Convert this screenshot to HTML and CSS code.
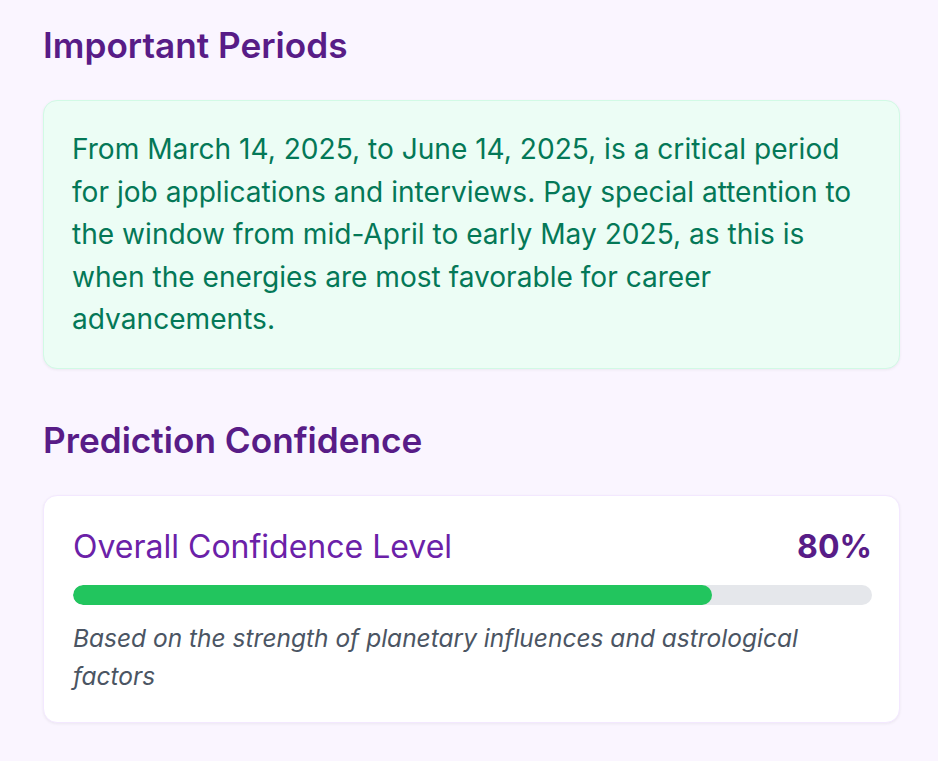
FILE: index.html
```html
<!DOCTYPE html>
<html lang="en">
<head>
<meta charset="utf-8">
<title>Prediction</title>
<link rel="stylesheet" href="styles.css">
</head>
<body>
<main class="page">
  <h2 class="section-title">Important Periods</h2>
  <div class="period-card">
    <p class="period-text">From March 14, 2025, to June 14, 2025, is a critical period for job applications and interviews. Pay special attention to the window from mid-April to early May 2025, as this is when the energies are most favorable for career advancements.</p>
  </div>

  <h2 class="section-title second">Prediction Confidence</h2>
  <div class="confidence-card">
    <div class="confidence-row">
      <span class="confidence-label">Overall Confidence Level</span>
      <span class="confidence-value">80%</span>
    </div>
    <div class="bar"><div class="bar-fill" style="width: 80%"></div></div>
    <p class="confidence-note">Based on the strength of planetary influences and astrological factors</p>
  </div>
</main>
</body>
</html>
```
FILE: styles.css
```css
html, body {
  margin: 0;
  padding: 0;
  background: #faf5ff;
}
body {
  font-family: Inter, "Noto Sans", sans-serif;
}
.page {
  padding: 25px 38px 40px 43px;
}
.section-title {
  margin: 0 0 35px;
  font-size: 35.2px;
  line-height: 40px;
  font-weight: 600;
  color: #581c87;
}
.section-title.second {
  margin-top: 51px;
}
.period-card {
  background: #ecfdf5;
  border: 1px solid #d1fae5;
  border-radius: 14px;
  padding: 27px 30px 27px 28px;
  box-shadow: 0 1px 3px rgba(0,0,0,0.06);
}
.period-text {
  margin: 0;
  font-size: 28.1px;
  line-height: 42.5px;
  color: #047857;
}
.confidence-card {
  background: #ffffff;
  border: 1px solid #f3e8ff;
  border-radius: 14px;
  padding: 30px 27px 27px 29px;
  box-shadow: 0 1px 3px rgba(0,0,0,0.06);
}
.confidence-row {
  display: flex;
  justify-content: space-between;
  align-items: center;
  line-height: 42px;
}
.confidence-label {
  font-size: 32px;
  color: #6b21a8;
}
.confidence-value {
  font-size: 32px;
  font-weight: 700;
  color: #581c87;
}
.bar {
  margin-top: 17px;
  height: 20px;
  border-radius: 10px;
  background: #e5e7eb;
  overflow: hidden;
}
.bar-fill {
  height: 100%;
  background: #22c55e;
  border-radius: 10px;
}
.confidence-note {
  margin: 14px 0 0;
  font-size: 24.5px;
  line-height: 38px;
  font-style: italic;
  color: #4b5563;
}
```
